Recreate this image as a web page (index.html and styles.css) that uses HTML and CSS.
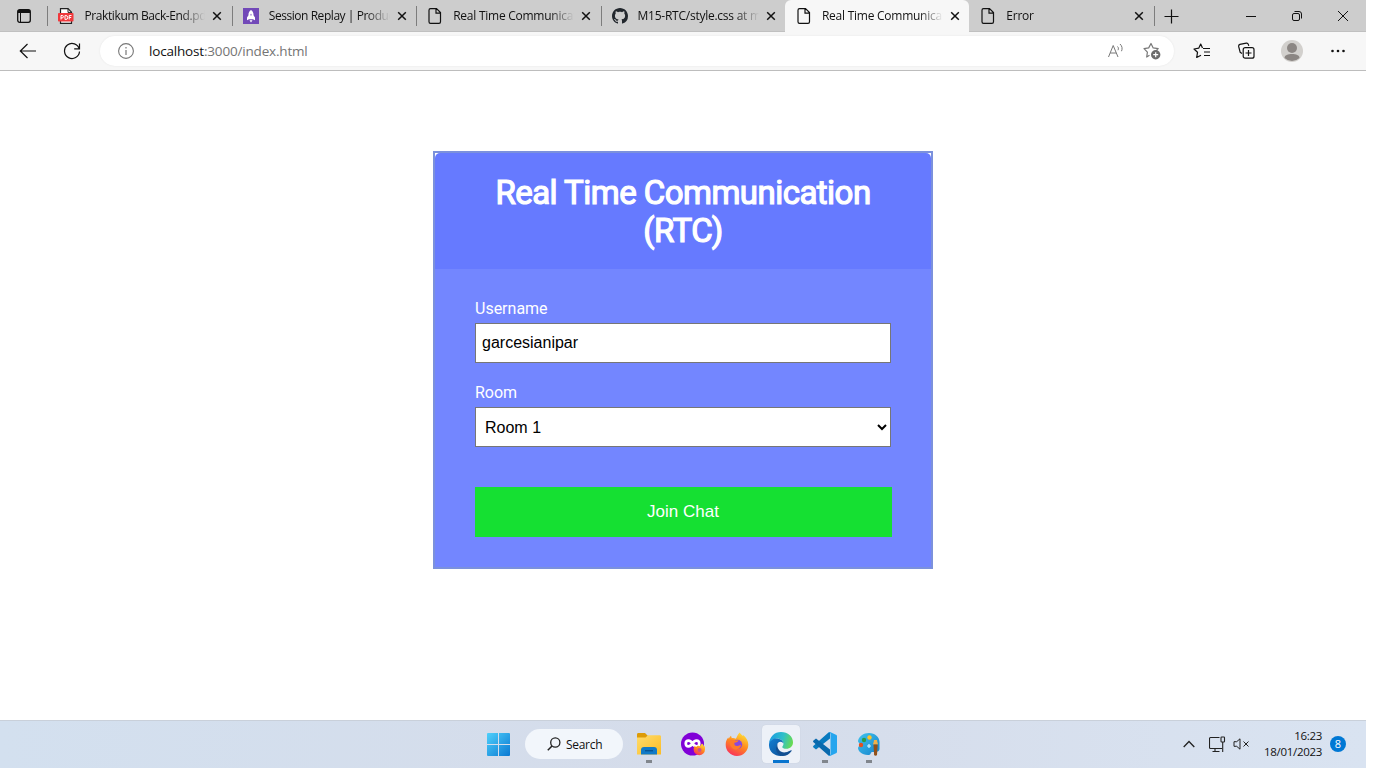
FILE: index.html
```html
<!DOCTYPE html>
<html lang="en">
<head>
<meta charset="utf-8">
<title>Real Time Communication</title>
<link rel="stylesheet" href="styles.css">
</head>
<body>
<svg class="defs" width="0" height="0">
  <defs>
    <symbol id="page" viewBox="0 0 16 16"><path d="M3.500.6h6l4 4v9.200c0 1-.5 1.600-1.500 1.600H3.500c-1 0-1.500-.6-1.500-1.600V2.200C2 1.200 2.500.6 3.500.6zM9 .8v4.400h4.300" fill="none" stroke="#111" stroke-width="1.200"/></symbol>
    <symbol id="close" viewBox="0 0 10 10"><path d="M1.200 1.200l7.600 7.600M8.800 1.200L1.200 8.800" fill="none" stroke="#111" stroke-width="1.500"/></symbol>
    <linearGradient id="win" x1="0" y1="0" x2="1" y2="1"><stop offset="0" stop-color="#4fd0fb"/><stop offset="1" stop-color="#0a78d2"/></linearGradient>
    <linearGradient id="fold" x1="0" y1="0" x2="1" y2="1"><stop offset="0" stop-color="#ffdc6c"/><stop offset="1" stop-color="#fbbc25"/></linearGradient>
    <linearGradient id="fox" x1=".8" y1="0" x2=".3" y2="1"><stop offset="0" stop-color="#ffe63a"/><stop offset=".5" stop-color="#ff8a1e"/><stop offset="1" stop-color="#f92f5c"/></linearGradient>
    <linearGradient id="edgeTop" x1="0" y1=".4" x2="1" y2=".6"><stop offset="0" stop-color="#1b9de2"/><stop offset=".55" stop-color="#2fc0c8"/><stop offset="1" stop-color="#6bdc4c"/></linearGradient>
    <linearGradient id="edgeLow" x1="0" y1="0" x2="1" y2="1"><stop offset="0" stop-color="#1580d3"/><stop offset="1" stop-color="#0b4a91"/></linearGradient>
    <linearGradient id="paint" x1="0" y1="0" x2="1" y2="1"><stop offset="0" stop-color="#40c4ee"/><stop offset="1" stop-color="#1581cc"/></linearGradient>
  </defs>
</svg>

<div class="screen">
  <header class="tabs">
    <div class="tabs-menu">
      <svg width="14" height="14" viewBox="0 0 14 14"><rect x=".7" y=".7" width="12.600" height="12.600" rx="2" fill="none" stroke="#111" stroke-width="1.300"/><path d="M1 1h12v3H1z" fill="#111"/><path d="M3.500 4v9" stroke="#111"/></svg>
    </div>
    <div class="tab">
      <svg class="tab-icon" viewBox="0 0 16 16"><path d="M2.500.6h7.500l3.500 3.600v11.200h-11z" fill="#fff" stroke="#222" stroke-width="1.200"/><path d="M10 .6v3.800h3.500" fill="none" stroke="#222"/><rect x="0" y="5" width="15.500" height="8.500" rx=".8" fill="#f0383c"/><path d="M3 11.500v-4h1.200a1.200 1.200 0 0 1 0 2.400H3M7 7.500v4h.8a1.900 2 0 0 0 0-4zM11.200 11.500v-4h2.300M11.200 9.500h2" fill="none" stroke="#fff"/></svg>
      <span class="tab-title t-pdf">Praktikum Back-End.pdf</span>
      <svg class="tab-close"><use href="#close"/></svg>
    </div>
    <div class="tab">
      <svg class="tab-icon" viewBox="0 0 16 16"><rect width="16" height="16" fill="#7249b8"/><path d="M8 2c2 1.300 2.700 3.300 2.500 5.300L12 9.500v2.700l-2-.9H6l-2 .9V9.500l1.500-2.200C5.300 5.300 6 3.300 8 2z" fill="#fff"/><circle cx="8" cy="6.700" r="1" fill="#b9a3dc"/><path d="M6.500 12.300h3L8 14.500z" fill="#fff"/></svg>
      <span class="tab-title t-session">Session Replay | Product</span>
      <svg class="tab-close"><use href="#close"/></svg>
    </div>
    <div class="tab">
      <svg class="tab-icon"><use href="#page"/></svg>
      <span class="tab-title">Real Time Communication</span>
      <svg class="tab-close"><use href="#close"/></svg>
    </div>
    <div class="tab">
      <svg class="tab-icon" viewBox="0 0 16 16"><path fill="#22272d" d="M8 0C3.580 0 0 3.580 0 8c0 3.540 2.290 6.530 5.470 7.590.4.070.55-.17.55-.38 0-.19-.01-.82-.01-1.490-2.010.37-2.530-.49-2.690-.94-.09-.23-.48-.94-.82-1.130-.28-.15-.68-.52-.01-.53.63-.01 1.080.58 1.230.82.72 1.210 1.870.87 2.330.66.070-.52.280-.87.510-1.070-1.780-.2-3.640-.89-3.640-3.950 0-.87.310-1.590.82-2.150-.08-.2-.36-1.020.08-2.120 0 0 .67-.21 2.200.82.640-.18 1.320-.27 2-.27s1.360.09 2 .27c1.530-1.040 2.200-.82 2.200-.82.440 1.100.160 1.920.080 2.120.510.560.820 1.270.820 2.150 0 3.070-1.870 3.750-3.650 3.950.290.250.540.730.540 1.480 0 1.070-.010 1.930-.010 2.200 0 .210.150.460.550.380A8.010 8.010 0 0 0 16 8c0-4.420-3.580-8-8-8z"/></svg>
      <span class="tab-title t-git">M15-RTC/style.css at main</span>
      <svg class="tab-close"><use href="#close"/></svg>
    </div>
    <div class="tab active">
      <svg class="tab-icon"><use href="#page"/></svg>
      <span class="tab-title">Real Time Communication</span>
      <svg class="tab-close"><use href="#close"/></svg>
    </div>
    <div class="tab after-active">
      <svg class="tab-icon"><use href="#page"/></svg>
      <span class="tab-title">Error</span>
      <svg class="tab-close"><use href="#close"/></svg>
    </div>
    <div class="new-tab">
      <svg width="15" height="15" viewBox="0 0 15 15"><path d="M7.500.5v14M.5 7.500h14" stroke="#111" stroke-width="1.200"/></svg>
    </div>
    <div class="window-controls">
      <svg viewBox="0 0 12 12"><path d="M1 6.500h10" stroke="#111"/></svg>
      <svg viewBox="0 0 12 12"><g fill="none" stroke="#111"><rect x="1.500" y="3.500" width="7" height="7" rx="1.500"/><path d="M3.500 1.500H8A2.500 2.500 0 0 1 10.500 4v4.500"/></g></svg>
      <svg viewBox="0 0 12 12"><path d="M1 1l10 10M11 1L1 11" stroke="#111"/></svg>
    </div>
  </header>

  <nav class="toolbar">
    <svg class="back" viewBox="0 0 18 16"><path d="M17 8H1.500M8.500 1L1.300 8l7.200 7" fill="none" stroke="#111" stroke-width="1.200"/></svg>
    <svg class="reload" viewBox="0 0 18 18"><path d="M16.300 7.200A7.500 7.500 0 1 0 16.500 9.500M16.500 1.500v5.300h-5.300" fill="none" stroke="#111" stroke-width="1.200"/></svg>
    <div class="address">
      <svg width="16" height="16" viewBox="0 0 16 16"><circle cx="8" cy="8" r="7.400" fill="none" stroke="#777" stroke-width="1.100"/><path d="M8 7v5M8 4v1.400" stroke="#777" stroke-width="1.200"/></svg>
      <div class="url"><span class="host">localhost</span>:3000/index.html</div>
      <svg class="read" width="16" height="16" viewBox="0 0 16 16"><path d="M.5 14L5.200 2.500 10 14M2.200 10h6M9.500 3.500c1 .9 1.200 2.300.5 3.700M12 1c2.200 2 2.600 4.700 1.500 7.200" fill="none" stroke="#777"/></svg>
      <svg class="fav-add" width="18" height="18" viewBox="0 0 18 18"><path d="M6.500 13.300L3.700 15l.7-4.900L1 6.700l4.700-.8L8 1.500l2.200 4.400 5 .8-2 2" fill="none" stroke="#777" stroke-width="1.200" stroke-linejoin="round"/><circle cx="12.700" cy="12.700" r="4.700" fill="#6c6c6c"/><path d="M12.700 10.200v5M10.200 12.700h5" stroke="#fff" stroke-width="1.200"/></svg>
    </div>
    <div class="actions">
      <svg width="18" height="18" viewBox="0 0 18 18"><path d="M9.500 6L7.700 2 5.700 6.200 1 7l3.500 3.300-.8 5.200L8 13.200M10 6.500h7M11 10h6M11 13.500h6" fill="none" stroke="#111" stroke-width="1.200" stroke-linejoin="round"/></svg>
      <svg width="18" height="18" viewBox="0 0 18 18"><path d="M4 11.500L2.200 10.300.7 4.700C.5 3.500.9 2.700 1.900 2.400l6.400-1.200c1-.2 1.700.3 2 1.200l.5 1.500" fill="none" stroke="#111" stroke-width="1.200"/><rect x="5.200" y="5.700" width="10.800" height="10.500" rx="2" fill="none" stroke="#111" stroke-width="1.200"/><path d="M10.500 8v6M7.500 11h6" stroke="#111" stroke-width="1.200"/></svg>
      <svg class="avatar" width="22" height="22" viewBox="0 0 22 22"><circle cx="11" cy="11" r="11" fill="#d2d0cd"/><circle cx="11" cy="8" r="5" fill="#8b8683"/><path d="M3.500 18c0-3 3.500-4 7.500-4s7.500 1 7.500 4A11 11 0 0 1 3.500 18z" fill="#8b8683"/></svg>
      <svg width="14" height="14" viewBox="0 0 14 14"><g fill="#111"><circle cx="1.500" cy="7" r="1.300"/><circle cx="7" cy="7" r="1.300"/><circle cx="12.500" cy="7" r="1.300"/></g></svg>
    </div>
  </nav>

  <main class="page">
    <section class="card">
      <div class="card-head"><h1>Real Time Communication (RTC)</h1></div>
      <form class="card-body">
        <label for="username">Username</label>
        <input id="username" type="text" value="garcesianipar">
        <label for="room">Room</label>
        <select id="room"><option>Room 1</option></select>
        <button type="button">Join Chat</button>
      </form>
    </section>
  </main>

  <footer class="taskbar">
    <div class="apps">
      <svg class="start" width="23" height="23" viewBox="0 0 23 23"><path d="M0 1a1 1 0 0 1 1-1h10v11H0zM12 0h10a1 1 0 0 1 1 1v10H12zM0 12h11v11H1a1 1 0 0 1-1-1zM12 12h11v10a1 1 0 0 1-1 1H12z" fill="url(#win)"/></svg>
      <div class="search">
        <svg width="14" height="14" viewBox="0 0 14 14"><circle cx="8.300" cy="5.500" r="4.600" fill="none" stroke="#222" stroke-width="1.300"/><path d="M5 8.900L.8 13.200" stroke="#222" stroke-width="1.500"/></svg>
        <span>Search</span>
      </div>
      <div class="app running">
        <svg width="24" height="24" viewBox="0 0 24 24"><path d="M0 2.500C0 1.500.5 1 1.500 1H8l2.500 2.500V8H0z" fill="#dd9b08"/><path d="M0 5.500h8.500L11 3.300h11.500c1 0 1.500.5 1.500 1.500v17.700H0z" fill="url(#fold)"/><path d="M4 22.500V18c0-2 1-3 3-3h10c2 0 3 1 3 3v4.500z" fill="#117ac7"/><path d="M8 18.700h8" stroke="#075494" stroke-width="1.400"/></svg>
      </div>
      <div class="app">
        <svg width="24" height="24" viewBox="0 0 24 24"><circle cx="11.500" cy="12" r="11.500" fill="#8000d7"/><path d="M11.500 11.500C9.500 8 4.800 7.600 4.800 11.500s4.700 3.500 6.700 0c2-3.500 6.700-3.900 6.700 0s-4.700 3.500-6.700 0z" fill="none" stroke="#fff" stroke-width="2.800"/><path d="M23.800 14c.3 1.200.2 2.500.2 3.500a5.700 5.700 0 0 1-11.400 0c0-1.300.3-2.500 1.200-3.500l1.200 1 2-1.500 1.500 1 2.500-3c1.200.8 1.700 2 1.900 3.200z" fill="url(#fox)"/><circle cx="18.500" cy="18" r="2" fill="#c8508f"/></svg>
      </div>
      <div class="app">
        <svg width="24" height="24" viewBox="0 0 24 24"><path d="M14.500.5c1.200 1.200 2 2.200 3 3.200l1-.5c2.800 2.400 4.800 5.600 4.800 9.600A11.300 11.300 0 0 1 .7 12.500c0-2.600.8-5 2.600-7l.5 1.300c.6-1.300 1.200-2.200 2.200-3l.8 2.400c1.500-.3 2.700 0 4 .5 1-.8 1.300-3.500 3.700-6.200z" fill="url(#fox)"/><circle cx="12.500" cy="12.500" r="4.700" fill="#8848df"/><path d="M5 8c2-.6 4-.4 5.700.6l3-.4c-1 1.900-2.500 2.300-4.300 2.500-.3 2 .5 3.300 2.600 3.300 1.800 0 2.500-1.300 4.200-1-1 3.200-3.300 5-6 4.600C6.500 17 4 13 5 8z" fill="#ff7c2a"/></svg>
      </div>
      <div class="app current">
        <svg width="24" height="24" viewBox="0 0 24 24"><path d="M0 11.500C.6 4.800 5.500 0 12 0c7 0 12 4.700 12 10.200 0 4-3 6.500-6.600 6.500-2.600 0-4.100-.9-4.100-1.800 0-.7 1.200-1.200 1.200-3.200 0-3-3-5.300-6.500-5.300C4.300 6.400 1.400 8.500 0 11.500z" fill="url(#edgeTop)"/><path d="M0 12c.7-3.800 4-5.600 7.500-5.600 4 0 7 2.500 7 5.300-.3-1-1.300-2-3-2-2 0-3.700 2-3.700 4.800 0 5.500 5.500 8 10.500 6.500-2 2-4.300 3-6.800 3C5 24-.5 19 0 12z" fill="url(#edgeLow)"/><path d="M8.500 11.700c-1 5 3 9.300 8 8.600 2.300-.3 4.300-1.400 5.500-2 .5-.2.900.2.600.7-2 3-5.300 5-9 5-5.600-.8-8.600-7-5.100-12.300z" fill="#124f92"/></svg>
      </div>
      <div class="app running">
        <svg width="24" height="24" viewBox="0 0 24 24"><path d="M17 0v6.500L3 17.500.5 15.500c-.6-.6-.6-1.200 0-1.700L15.500.4z" fill="#087abf"/><path d="M17 24v-6.500L3 6.500.5 8.500c-.6.6-.6 1.200 0 1.700l15 13.400z" fill="#0969ad"/><path d="M17 0l6 2.700c.7.300 1 .8 1 1.500v15.600c0 .7-.3 1.200-1 1.500L17 24c-1 .2-1.700-.3-2.200-.8 1.400.6 2.700 0 2.700-1.500V2.300c0-1.500-1.300-2.100-2.700-1.500C15.500.2 16.200-.1 17 0z" fill="#25a5ee"/></svg>
      </div>
      <div class="app running">
        <svg width="24" height="24" viewBox="0 0 24 24"><path d="M12 1c6 0 10.500 4 10.500 9v7c0 2-2 3-4 3H15c-1.500 0-1 3-3 3C5 23.500 1 19 1 16c0-1.700 2-2 2-3.500S.8 10.500 1 9C1.800 4.500 6.500 1 12 1z" fill="url(#paint)"/><circle cx="7" cy="8" r="2.200" fill="#2e9d45"/><circle cx="12.500" cy="5.500" r="2.200" fill="#ffc326"/><circle cx="4" cy="13" r="2.200" fill="#e35120"/><path d="M12 12v4M10 14h4" stroke="#d8f5ff" stroke-width="1.200"/><path d="M17 8c0 2-1 3-1 4.500h5C21 11 20 10 20 8z" fill="#f1b14a"/><path d="M16.500 12.500h4.200L20 23c-.4 1-2.500 1-2.900 0z" fill="#925019"/></svg>
      </div>
    </div>
    <div class="tray">
      <svg class="chevron" width="12" height="8" viewBox="0 0 12 8"><path d="M.7 7L6 1.500 11.300 7" fill="none" stroke="#222" stroke-width="1.300"/></svg>
      <svg class="network" width="17" height="17" viewBox="0 0 17 17"><g fill="none" stroke="#222" stroke-width="1.100"><path d="M10.500 1.500H1.500a1 1 0 0 0-1 1v9a1 1 0 0 0 1 1h11.500M6 12.500v3M3.500 15.500h7"/><rect x="12" y="1" width="3.500" height="5" rx=".7"/><path d="M13.700 6v10"/></g></svg>
      <svg class="volume" width="17" height="12" viewBox="0 0 17 12"><path d="M7 .8L3.700 3.700H1v4.600h2.700L7 11.200zM10.500 3.500l5 5M15.500 3.500l-5 5" fill="none" stroke="#222"/></svg>
      <div class="clock"><span>16:23</span><span>18/01/2023</span></div>
      <span class="badge">8</span>
    </div>
  </footer>
</div>
</body>
</html>
```
FILE: styles.css
```css
* { box-sizing: border-box; }

body {
  margin: 0;
  background: #fff;
  font-family: "Open Sans", "Noto Sans", sans-serif;
  color: #111;
}

.defs { display: block; }

.screen {
  width: 1366px;
  height: 768px;
  display: flex;
  flex-direction: column;
  overflow: hidden;
}

svg { flex: none; }

/* Tab strip */
.tabs {
  height: 32px;
  flex: none;
  display: flex;
  background: #cdcdcd;
  box-shadow: inset 0 -1px #c0c0c0;
}

.tabs-menu {
  width: 47.400px;
  display: flex;
  align-items: center;
  padding-left: 17px;
}

.tab {
  width: 184.400px;
  height: 32px;
  display: flex;
  align-items: center;
  padding: 0 9px 0 11px;
  background: linear-gradient(#7d7d7d, #7d7d7d) 0 6px / 1px 20px no-repeat;
}

.tab.active {
  background: #f7f7f7;
  border-radius: 6px 6px 0 0;
}

.tab.after-active { background: none; }

.tab-icon { width: 16px; height: 16px; }

.tab-title {
  width: 121px;
  margin-left: 10px;
  overflow: hidden;
  white-space: nowrap;
  font-size: 12px;
  line-height: 20px;
  letter-spacing: -0.250px;
  mask-image: linear-gradient(90deg, #000 80%, transparent);
}

.t-pdf { letter-spacing: -0.380px; }
.t-session { letter-spacing: -0.450px; }
.t-git { letter-spacing: -0.250px; }

.tab-close { width: 10px; height: 10px; margin-left: 7px; }

.new-tab {
  display: flex;
  align-items: center;
  padding-left: 10px;
  background: linear-gradient(#7d7d7d, #7d7d7d) 0 6px / 1px 20px no-repeat;
}

.window-controls {
  margin-left: auto;
  display: flex;
  align-items: center;
  gap: 34px;
  padding-right: 17px;
}

.window-controls svg { width: 12px; height: 12px; }

/* Toolbar */
.toolbar {
  height: 39px;
  flex: none;
  display: flex;
  align-items: center;
  background: #f7f7f7;
  border-bottom: 1px solid #bdbdbd;
}

.back { width: 18px; height: 16px; margin-left: 19px; }
.reload { width: 18px; height: 18px; margin-left: 26px; }

.address {
  width: 1074px;
  height: 30px;
  margin-left: 19px;
  padding: 0 13px 0 18px;
  display: flex;
  align-items: center;
  border-radius: 15px;
  background: #fff;
  box-shadow: 0 0 2px #e4e4e4;
}

.url {
  flex: 1;
  margin-left: 15px;
  font-size: 13.500px;
  letter-spacing: -0.180px;
  color: #757575;
}

.host { color: #111; }
.fav-add { margin-left: 19px; }

.actions {
  flex: 1;
  display: flex;
  align-items: center;
  justify-content: space-between;
  padding: 0 21px 0 19px;
}

.avatar { margin: 0 1px 0 -1px; }

/* Join form */
.page {
  flex: 1;
  padding-top: 80px;
  background: #fff;
}

.card {
  width: 500px;
  height: 418px;
  margin: 0 auto;
  border: 2px solid #7b91dc;
  font-family: Roboto, sans-serif;
  color: #fff;
}

.card-head {
  height: 116px;
  padding: 20.500px 20px 19px;
  border-radius: 5px 5px 0 0;
  background: #667aff;
}

.card-head h1 {
  margin: 0;
  font-size: 33px;
  font-weight: 400;
  line-height: 38px;
  letter-spacing: -0.530px;
  text-align: center;
  -webkit-text-stroke: 1.200px #fff;
}

.card-body {
  height: 298px;
  padding: 30px 40px 29px;
  display: flex;
  flex-direction: column;
  background: #7386ff;
}

.card-body label {
  height: 19px;
  flex: none;
  margin-bottom: 5px;
  font-size: 16px;
  line-height: 19px;
}

.card-body input,
.card-body select {
  width: 416px;
  height: 40px;
  flex: none;
  padding: 5px 6px;
  border: 1px solid #767676;
  border-radius: 0;
  background-color: #fff;
  color: #000;
  font: 16px "Liberation Sans", sans-serif;
}

.card-body select { padding: 6px 6px 5px 5px; }
.card-body input { margin-bottom: 20px; }

.card-body button {
  width: 417px;
  height: 50px;
  flex: none;
  margin-top: 40px;
  padding: 0 1px 1px 0;
  border: 0;
  background: #15e032;
  color: #fff;
  font: 17px "Liberation Sans", sans-serif;
}

/* Taskbar */
.taskbar {
  height: 48px;
  flex: none;
  display: flex;
  justify-content: space-between;
  padding-bottom: 1px;
  background: linear-gradient(90deg, #d3e0ef, #d5dcea 50%, #d9e3f1);
  border-top: 1px solid #c9d0da;
}

.apps {
  display: flex;
  align-items: center;
  padding-left: 487px;
}

.search {
  width: 98px;
  height: 30px;
  margin: 0 7px 0 15px;
  padding-left: 22px;
  display: flex;
  align-items: center;
  gap: 5px;
  border-radius: 15px;
  background: #f2f6fb;
  font-size: 12px;
  letter-spacing: -0.300px;
}

.app {
  width: 38px;
  height: 38px;
  margin-right: 6px;
  display: flex;
  align-items: center;
  justify-content: center;
  border-radius: 4px;
}

.running {
  background: linear-gradient(#81868d, #81868d) 16px 35px / 6px 3px no-repeat;
}

.current {
  background: linear-gradient(#0874ce, #0874ce) 11px 35px / 16px 3px no-repeat, #edf1f8;
  box-shadow: 0 0 1px #b9c0cc;
}

.tray {
  display: flex;
  align-items: center;
  padding-right: 20px;
}

.network { margin-left: 14px; }
.volume { margin-left: 7px; }

.clock {
  width: 72px;
  margin-right: 1px;
  display: flex;
  flex-direction: column;
  align-items: flex-end;
  font-size: 11.500px;
  line-height: 16px;
  letter-spacing: -0.300px;
}

.badge {
  width: 16px;
  height: 16px;
  margin-left: 7px;
  border-radius: 50%;
  background: #0078d4;
  color: #fff;
  font-size: 11px;
  line-height: 16px;
  text-align: center;
}
```
